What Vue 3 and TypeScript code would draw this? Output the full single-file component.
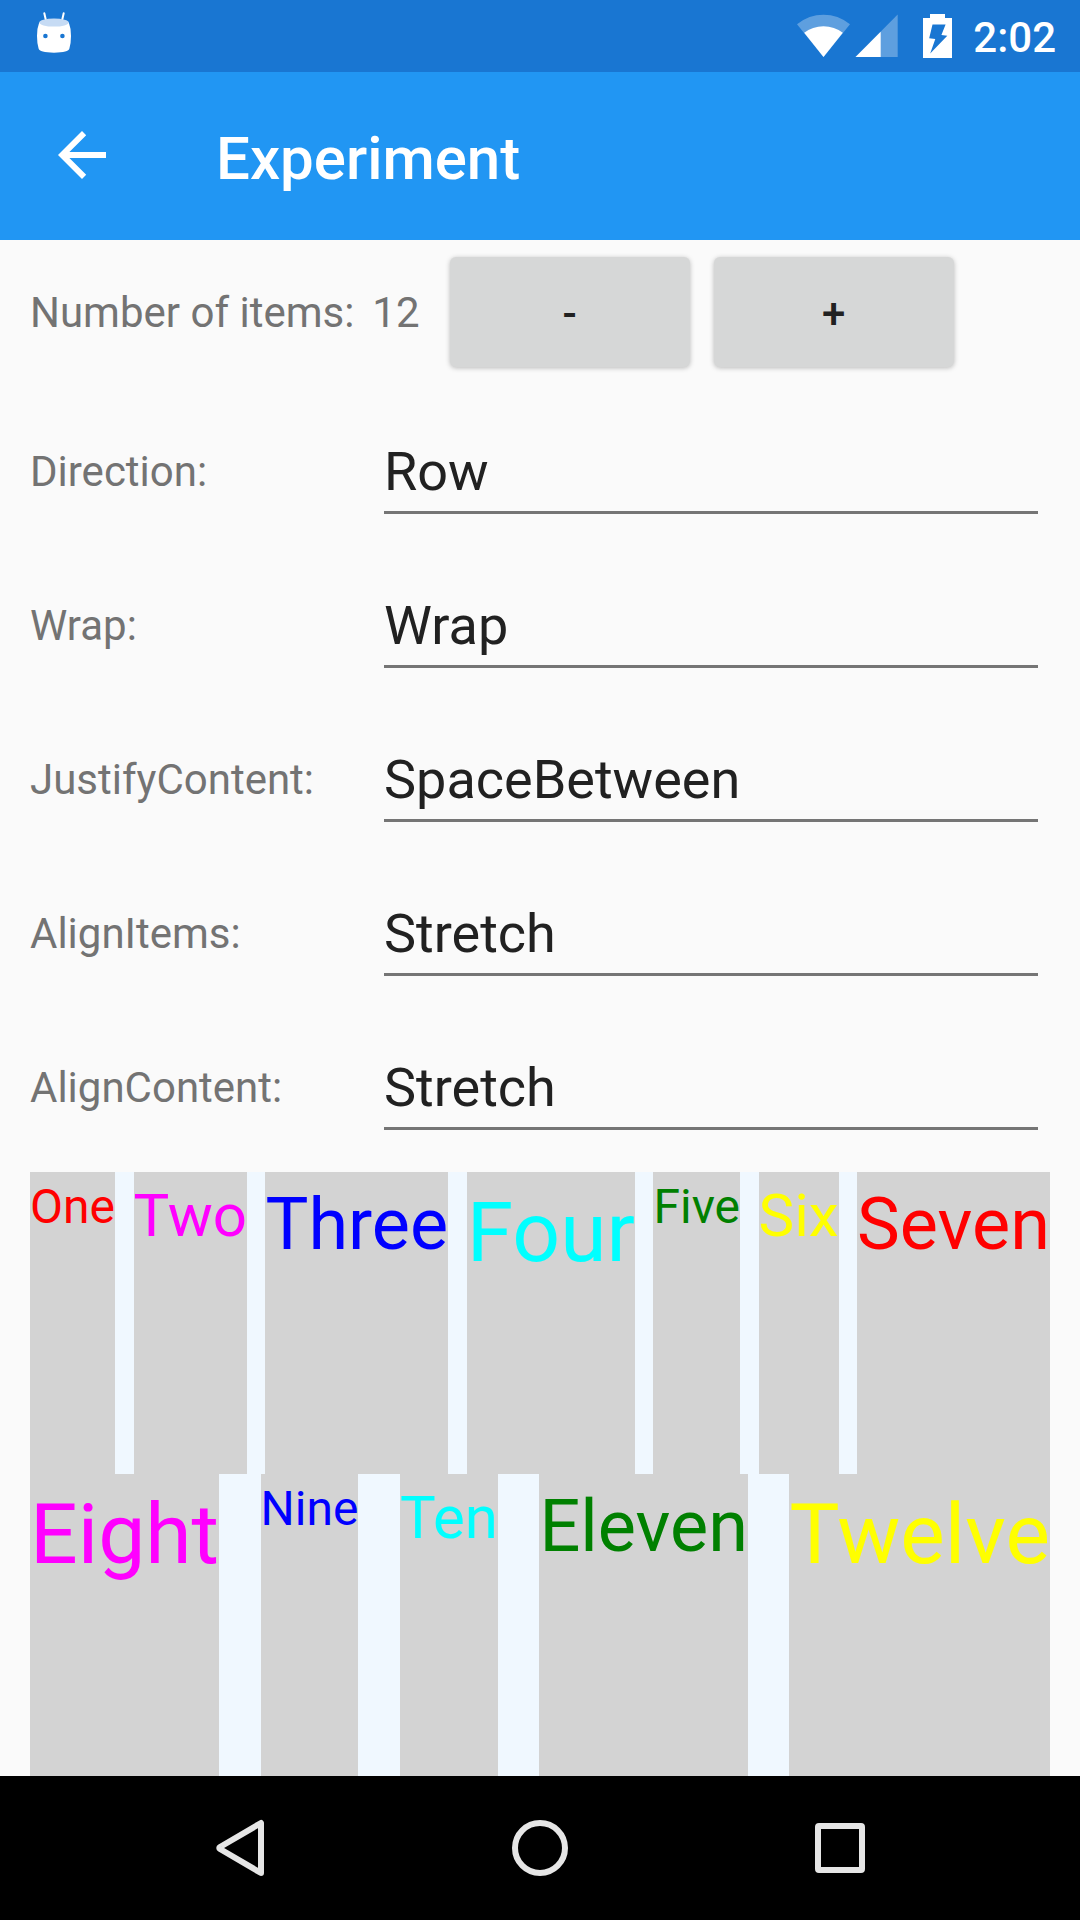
<script setup lang="ts">
import { computed, ref } from 'vue'
import type { CSSProperties } from 'vue'

interface Picker {
  id: string
  label: string
  value: string
  options: string[]
}

const names = ['One', 'Two', 'Three', 'Four', 'Five', 'Six', 'Seven', 'Eight', 'Nine', 'Ten', 'Eleven', 'Twelve']
const colors = ['red', 'magenta', 'blue', 'cyan', 'green', 'yellow']
const sizes = ['small', 'medium', 'large', 'huge']

const count = ref(12)

const pickers = ref<Picker[]>([
  { id: 'direction', label: 'Direction:', value: 'Row', options: ['Row', 'RowReverse', 'Column', 'ColumnReverse'] },
  { id: 'wrap', label: 'Wrap:', value: 'Wrap', options: ['NoWrap', 'Wrap', 'Reverse'] },
  {
    id: 'justify',
    label: 'JustifyContent:',
    value: 'SpaceBetween',
    options: ['Start', 'Center', 'End', 'SpaceBetween', 'SpaceAround', 'SpaceEvenly'],
  },
  { id: 'items', label: 'AlignItems:', value: 'Stretch', options: ['Stretch', 'Center', 'Start', 'End'] },
  {
    id: 'content',
    label: 'AlignContent:',
    value: 'Stretch',
    options: ['Stretch', 'Center', 'Start', 'End', 'SpaceBetween', 'SpaceAround', 'SpaceEvenly'],
  },
])

const cssValues: Record<string, string> = {
  Row: 'row',
  RowReverse: 'row-reverse',
  Column: 'column',
  ColumnReverse: 'column-reverse',
  NoWrap: 'nowrap',
  Wrap: 'wrap',
  Reverse: 'wrap-reverse',
  Start: 'flex-start',
  Center: 'center',
  End: 'flex-end',
  Stretch: 'stretch',
  SpaceBetween: 'space-between',
  SpaceAround: 'space-around',
  SpaceEvenly: 'space-evenly',
}

const flexStyle = computed(() => {
  const [direction, wrap, justify, items, content] = pickers.value.map((p) => cssValues[p.value])
  return {
    flexDirection: direction,
    flexWrap: wrap,
    justifyContent: justify,
    alignItems: items,
    alignContent: content,
  } as CSSProperties
})

const shown = computed(() =>
  names.slice(0, count.value).map((name, i) => ({
    name,
    classes: [colors[i % colors.length], sizes[i % sizes.length]],
  })),
)

function step(delta: number) {
  count.value = Math.min(names.length, Math.max(0, count.value + delta))
}
</script>

<template>
  <div class="screen">
    <div class="status-bar">
      <svg class="droid" width="36" height="44" viewBox="0 0 36 44" aria-hidden="true">
        <path d="M8.3 3.2 10.3 12M27.7 3.2 25.7 12" stroke="#fff" stroke-width="2" stroke-linecap="round" />
        <path
          d="M3.2 12.5Q18 18 32.8 12.5Q35 18 35 26Q35 33 33.4 38.6Q32.6 42.7 18 42.7Q3.4 42.7 2.6 38.6Q1 33 1 26Q1 18 3.2 12.5z"
          fill="#fff"
        />
        <ellipse cx="18" cy="12.6" rx="14.8" ry="4" fill="#c6dbf4" />
        <circle cx="9.4" cy="26" r="2.3" fill="#1976d2" />
        <circle cx="26.4" cy="26" r="2.3" fill="#1976d2" />
      </svg>
      <div class="indicators">
        <div class="signals">
          <svg width="54" height="44" viewBox="0 0 54 44" aria-hidden="true">
            <path d="M0 10.2Q12 .8 26.5 .8T53 10.2L26.5 43z" fill="#fff" fill-opacity=".3" />
            <path d="M7.2 18.8Q15.5 12.2 26.5 12.2T45.8 18.8L26.5 43z" fill="#fff" />
          </svg>
          <svg width="47" height="44" viewBox="0 0 47 44" aria-hidden="true">
            <path d="M.5 43 42.7 .5V43z" fill="#fff" fill-opacity=".3" />
            <path d="M.5 43 25.7 17.7V43z" fill="#fff" />
          </svg>
        </div>
        <svg width="29" height="44" viewBox="0 0 29 44" aria-hidden="true">
          <path
            fill="#fff"
            fill-rule="evenodd"
            d="M7 0H22V4H29V44H0V4H7zM9.5 10.5 6.2 24.3 12.3 25 7.2 39.5 24.3 21.8 18.4 21 22.6 10.5z"
          />
        </svg>
        <time class="clock">2:02</time>
      </div>
    </div>

    <header class="app-bar">
      <button class="back" type="button" aria-label="Back">
        <svg width="72" height="72" viewBox="0 0 24 24" aria-hidden="true">
          <path d="M20 11H7.8l5.6-5.6L12 4l-8 8 8 8 1.4-1.4L7.8 13H20z" fill="#fff" />
        </svg>
      </button>
      <h1 class="title">Experiment</h1>
    </header>

    <main class="content">
      <div class="counter">
        <span class="counter-text">Number of items:</span>
        <output class="counter-text count">{{ count }}</output>
        <div class="steppers">
          <button class="stepper" type="button" @click="step(-1)">-</button>
          <button class="stepper" type="button" @click="step(1)">+</button>
        </div>
      </div>

      <div v-for="picker in pickers" :key="picker.id" class="field">
        <label :for="picker.id">{{ picker.label }}</label>
        <select :id="picker.id" v-model="picker.value" class="picker">
          <option v-for="option in picker.options" :key="option">{{ option }}</option>
        </select>
      </div>

      <div class="flex-area" :style="flexStyle">
        <div v-for="item in shown" :key="item.name" class="item" :class="item.classes">{{ item.name }}</div>
      </div>
    </main>

    <nav class="nav-bar">
      <button class="nav-button" type="button" aria-label="Back">
        <svg width="60" height="60" viewBox="0 0 60 60" aria-hidden="true">
          <path d="M51 5V55L10 31Q8.500 30 10 29z" class="outline" />
        </svg>
      </button>
      <button class="nav-button" type="button" aria-label="Home">
        <svg width="60" height="60" viewBox="0 0 60 60" aria-hidden="true">
          <circle cx="30" cy="30" r="25" class="outline" />
        </svg>
      </button>
      <button class="nav-button" type="button" aria-label="Overview">
        <svg width="60" height="60" viewBox="0 0 60 60" aria-hidden="true">
          <rect x="8" y="8" width="44" height="44" rx="1" class="outline" />
        </svg>
      </button>
    </nav>
  </div>
</template>

<style>
body {
  margin: 0;
  background: #fafafa;
}
</style>

<style scoped>
.screen {
  display: flex;
  flex-direction: column;
  min-height: 100vh;
  background: #fafafa;
  color: #737373;
  font-family: Roboto, sans-serif;
  font-size: 42px;
  line-height: 50px;
}

svg {
  display: block;
  flex: none;
}

button {
  border: 0;
  padding: 0;
  font: inherit;
}

.status-bar {
  display: flex;
  align-items: center;
  justify-content: space-between;
  height: 72px;
  padding: 0 24px 0 36px;
  background: #1976d2;
}

.droid {
  margin-bottom: 8px;
}

.indicators {
  display: flex;
  align-items: center;
  gap: 21px;
}

.signals {
  display: flex;
  gap: 4px;
}

.clock {
  padding-top: 4px;
  color: #fff;
  font-weight: 500;
}

.app-bar {
  display: flex;
  align-items: center;
  gap: 98px;
  height: 168px;
  padding: 0 46px;
  background: #2196f3;
}

.back {
  padding-bottom: 2px;
  background: none;
}

.title {
  margin: 0;
  padding-top: 6px;
  color: #fff;
  font-size: 60px;
  font-weight: 500;
  line-height: 72px;
}

.content {
  display: flex;
  flex: 1;
  flex-direction: column;
  padding: 0 30px;
}

.counter {
  display: flex;
  align-items: center;
  padding: 17px 0 28px;
}

.counter-text {
  padding-top: 2px;
}

.count {
  margin: 0 30px 0 18px;
}

.steppers {
  display: flex;
  gap: 24px;
}

.stepper {
  box-sizing: border-box;
  width: 240px;
  height: 110px;
  border-radius: 6px;
  padding-top: 4px;
  background: #d6d7d7;
  box-shadow: 0 1px 5px rgba(0, 0, 0, 0.26);
  color: #212121;
  font-weight: 500;
}

.field {
  display: grid;
  grid-template-columns: 354px 1fr;
  align-items: center;
  height: 154px;
  padding-right: 12px;
}

.picker {
  box-sizing: border-box;
  width: 100%;
  height: 84px;
  border: 0;
  border-bottom: 3px solid #757575;
  border-radius: 0;
  padding: 3px 0 0;
  appearance: none;
  background: none;
  color: #212121;
  font: inherit;
  font-size: 54px;
  line-height: 64px;
}

.flex-area {
  display: flex;
  flex: 1;
  margin-top: 7px;
  background: #f0f8ff;
}

.item {
  background: #d3d3d3;
}

.small {
  font-size: 48px;
  line-height: 69px;
}

.medium {
  font-size: 60px;
  line-height: 87px;
}

.large {
  font-size: 72px;
  line-height: 105px;
}

.huge {
  font-size: 84px;
  line-height: 121px;
}

.red {
  color: #f00;
}

.magenta {
  color: #f0f;
}

.blue {
  color: #00f;
}

.cyan {
  color: #0ff;
}

.green {
  color: #008000;
}

.yellow {
  color: #ff0;
}

.nav-bar {
  display: flex;
  height: 144px;
  padding: 0 90px;
  background: #000;
}

.nav-button {
  display: flex;
  flex: 1;
  align-items: center;
  justify-content: center;
  background: none;
}

.outline {
  fill: none;
  stroke: #e6e6e6;
  stroke-width: 6px;
  stroke-linejoin: round;
}
</style>
